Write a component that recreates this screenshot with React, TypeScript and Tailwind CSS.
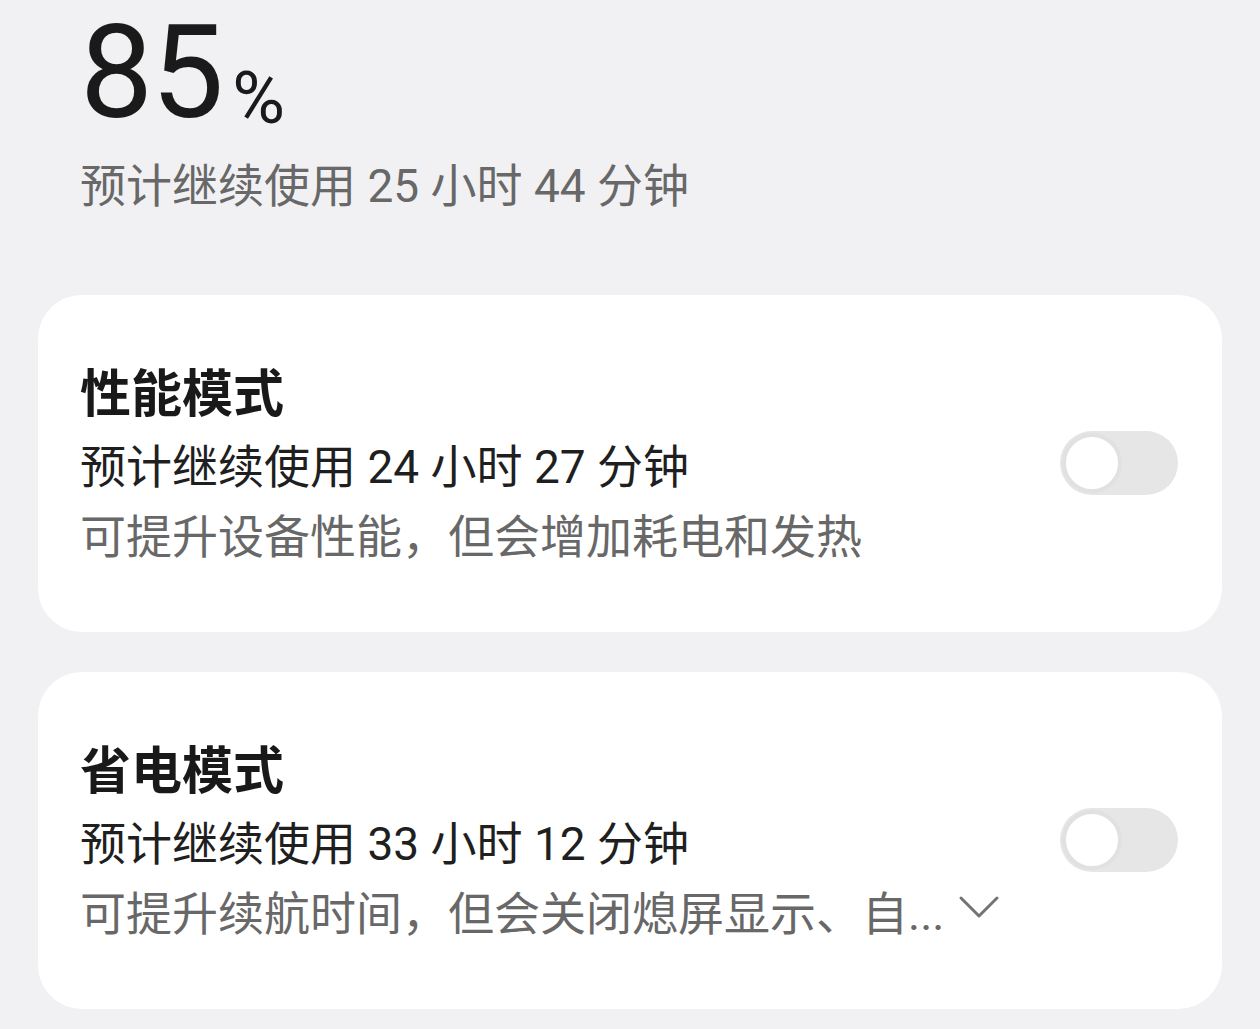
import React from 'react';

const font = { fontFamily: 'Roboto, "Noto Sans CJK SC", sans-serif' };

function Toggle() {
  return (
    <div className="w-[118px] h-[64px] rounded-full bg-[#e6e6e6] flex items-center px-[2px] shrink-0 mb-[6px] mr-[2px]">
      <div className="w-[60px] h-[60px] rounded-full bg-white border-[4px] border-[#e1e1e1]" />
    </div>
  );
}

type CardProps = {
  title: string;
  estimate: string;
  desc: React.ReactNode;
};

function ModeCard({ title, estimate, desc }: CardProps) {
  return (
    <div className="bg-white rounded-[44px] pl-[42px] pr-[42px] pt-[65px] pb-[60px] flex items-center justify-between">
      <div>
        <div className="text-[51px] leading-[70px] font-semibold text-[#191919]">{title}</div>
        <div className="text-[46px] leading-[70px] mt-[2px] text-[#1f1f1f]">{estimate}</div>
        <div className="text-[46px] leading-[70px] text-[#686868]">{desc}</div>
      </div>
      <Toggle />
    </div>
  );
}

export default function App() {
  return (
    <div className="w-[1260px] h-[1029px] bg-[#f1f1f3] overflow-hidden" style={font}>
      {/* Battery level */}
      <div className="pl-[80px] pt-[3px]">
        <div className="flex items-baseline">
          <span className="text-[130px] leading-[140px] font-normal text-[#1a1a1a] tracking-[-2px]">85</span>
          <span className="text-[72px] leading-[80px] font-normal text-[#1a1a1a] ml-[10px] translate-y-[6px]">%</span>
        </div>
        <div className="text-[46px] leading-[70px] mt-[8px] text-[#686868]">预计继续使用 25 小时 44 分钟</div>
      </div>

      <div className="px-[38px] mt-[74px] flex flex-col gap-[40px]">
        <ModeCard
          title="性能模式"
          estimate="预计继续使用 24 小时 27 分钟"
          desc="可提升设备性能，但会增加耗电和发热"
        />
        <ModeCard
          title="省电模式"
          estimate="预计继续使用 33 小时 12 分钟"
          desc={
            <span className="flex items-center">
              可提升续航时间，但会关闭熄屏显示、自...
              <svg className="ml-[14px] -mt-[14px]" width="42" height="26" viewBox="0 0 42 26" fill="none">
                <path d="M3 4 L21 22 L39 4" stroke="#737373" strokeWidth="3" strokeLinecap="round" strokeLinejoin="round" />
              </svg>
            </span>
          }
        />
      </div>
    </div>
  );
}
